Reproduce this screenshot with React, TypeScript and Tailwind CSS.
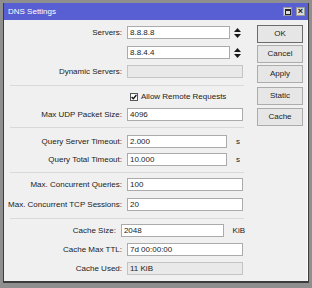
import React from "react"

function Arrows() {
    return (
        <svg width="7" height="10" viewBox="0 0 7 10" className="ml-[4px]">
            <path d="M3.5 0 L7 4 L0 4 Z" fill="#1a1a1a" />
            <path d="M0 6 L7 6 L3.5 10 Z" fill="#1a1a1a" />
        </svg>
    )
}

function Field({ label, value, width = "w-[116px]", disabled = false, suffix, arrows, className = "" }: {
    label?: string
    value?: string
    width?: string
    disabled?: boolean
    suffix?: string
    arrows?: boolean
    className?: string
}) {
    return (
        <div className={`flex items-center h-[13px] ${className}`}>
            <div className="w-[119px] text-right pr-[1px] whitespace-nowrap">{label ? label + ":" : ""}</div>
            <div
                className={`ml-[4px] h-[13px] ${width} border flex items-center pl-[2px] ${
                    disabled ? "bg-[#e9e9e9] border-[#c4c4c4]" : "bg-white border-[#ababab]"
                }`}
            >
                {value}
            </div>
            {arrows && <Arrows />}
            {suffix && <span className="ml-[9px]">{suffix}</span>}
        </div>
    )
}

function Sep({ className = "" }: { className?: string }) {
    return <div className={`ml-[6px] w-[234px] h-[1px] bg-[#d9d9d9] ${className}`} />
}

function Btn({ children, primary = false, className = "" }: { children: React.ReactNode; primary?: boolean; className?: string }) {
    return (
        <div
            className={`w-[46px] h-[18px] flex items-center justify-center bg-[#e6e6e6] border ${
                primary ? "border-[#6b6b6b]" : "border-[#acacac]"
            } ${className}`}
        >
            {children}
        </div>
    )
}

export default function App() {
    return (
        <div
            className="w-[312px] h-[288px] bg-[#8f8f8f] pt-[3px] px-[3px] text-[8px] text-[#1b1b1b]"
            style={{ fontFamily: '"Liberation Sans", Arial, sans-serif' }}
        >
            <div className="flex flex-col w-[306px] h-[280px] border-b-2 border-l border-r border-[#3c3c3c]">
                <div className="h-[17px] bg-[#585fd2] flex items-center pl-[4px] text-white">
                    <span>DNS Settings</span>
                    <div className="ml-auto flex items-center gap-[4px] pr-[3px]">
                        <div className="w-[9px] h-[9px] bg-[#dcdcdc] border border-[#9a9a9a] flex items-center justify-center">
                            <div className="w-[6px] h-[6px] border border-[#222] border-t-2" />
                        </div>
                        <div className="w-[9px] h-[9px] bg-[#dcdcdc] border border-[#9a9a9a] flex items-center justify-center text-[#111] text-[9px] font-bold leading-none">
                            ×
                        </div>
                    </div>
                </div>
                <div className="flex-1 bg-[#f0f0f0] flex border-r border-white">
                    <div className="w-[241px] flex flex-col pt-[6px]">
                        <Field label="Servers" value="8.8.8.8" width="w-[103px]" arrows />
                        <Field value="8.8.4.4" width="w-[103px]" arrows className="mt-[7px]" />
                        <Field label="Dynamic Servers" disabled className="mt-[6px]" />
                        <Sep className="mt-[7px]" />
                        <div className="mt-[4px] h-[13px] flex items-center pl-[126px]">
                            <div className="w-[8px] h-[8px] bg-white border border-[#555] flex items-center justify-center">
                                <svg width="6" height="6" viewBox="0 0 6 6">
                                    <path d="M0.6 3 L2.3 4.7 L5.4 1" stroke="#111" strokeWidth="1.3" fill="none" />
                                </svg>
                            </div>
                            <span className="ml-[3px]">Allow Remote Requests</span>
                        </div>
                        <Field label="Max UDP Packet Size" value="4096" className="mt-[5px]" />
                        <Sep className="mt-[6px]" />
                        <Field label="Query Server Timeout" value="2.000" width="w-[100px]" suffix="s" className="mt-[7px]" />
                        <Field label="Query Total Timeout" value="10.000" width="w-[100px]" suffix="s" className="mt-[5px]" />
                        <Sep className="mt-[6px]" />
                        <Field label="Max. Concurrent Queries" value="100" className="mt-[5px]" />
                        <Field label="Max. Concurrent TCP Sessions" value="20" className="mt-[7px]" />
                        <Sep className="mt-[7px]" />
                        <Field label="Cache Size" value="2048" width="w-[108px]" suffix="KiB" className="mt-[5px]" />
                        <Field label="Cache Max TTL" value="7d 00:00:00" className="mt-[6px]" />
                        <Field label="Cache Used" value="11 KiB" disabled className="mt-[6px]" />
                    </div>
                    <div className="flex flex-col pt-[5px] ml-[12px] gap-[2px]">
                        <Btn primary>OK</Btn>
                        <Btn>Cancel</Btn>
                        <Btn>Apply</Btn>
                        <Btn className="mt-[2px]">Static</Btn>
                        <Btn className="mt-[1px]">Cache</Btn>
                    </div>
                </div>
            </div>
        </div>
    )
}
